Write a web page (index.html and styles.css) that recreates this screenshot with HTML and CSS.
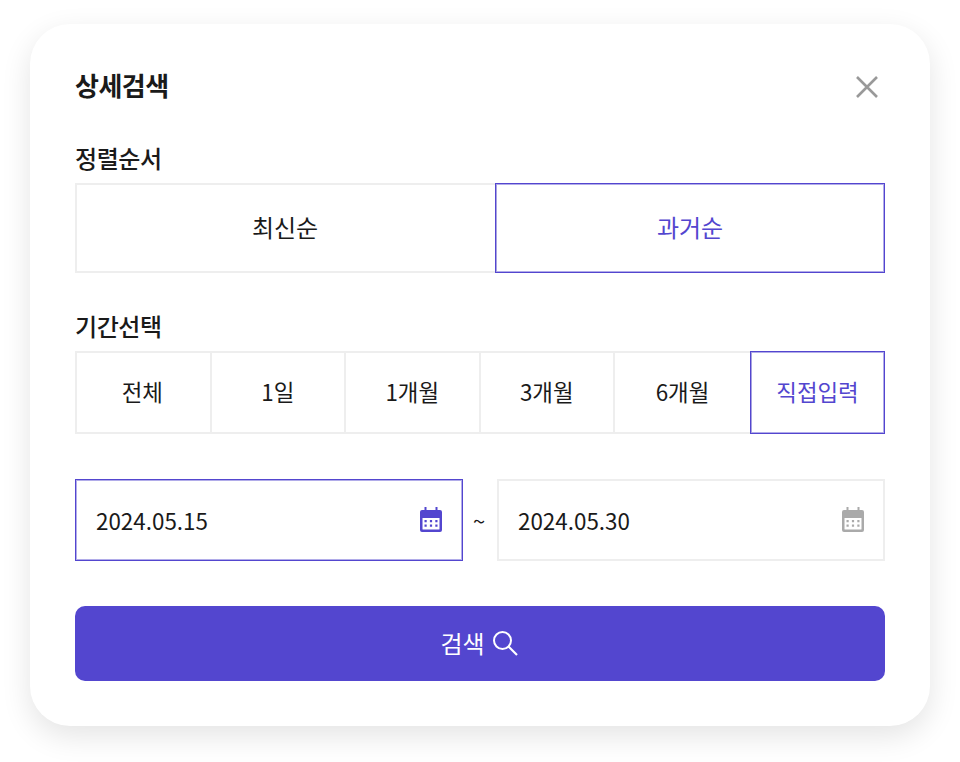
FILE: index.html
```html
<!DOCTYPE html>
<html lang="ko">

<head>
    <meta charset="UTF-8">
    <title>상세검색</title>
    <link rel="stylesheet" href="styles.css">
</head>

<body>
    <div class="modal">
        <div class="modal-head">
            <h2>상세검색</h2>
            <button class="close-btn" aria-label="닫기">
                <svg width="24" height="24" viewBox="0 0 24 24">
                    <path d="M2 2 L22 22 M22 2 L2 22" stroke="#999" stroke-width="2.6" fill="none" />
                </svg>
            </button>
        </div>

        <div class="group-label sort-label">정렬순서</div>
        <div class="tabs sort-tabs">
            <button class="tab">최신순</button>
            <button class="tab active">과거순</button>
        </div>

        <div class="group-label period-label">기간선택</div>
        <div class="tabs period-tabs">
            <button class="tab">전체</button>
            <button class="tab">1일</button>
            <button class="tab">1개월</button>
            <button class="tab">3개월</button>
            <button class="tab">6개월</button>
            <button class="tab active">직접입력</button>
        </div>

        <div class="date-row">
            <div class="date-field active">
                <span>2024.05.15</span>
                <svg class="cal" width="22" height="25" viewBox="0 0 22 25">
                    <path fill="#5346cf" fill-rule="evenodd" d="M4.500 0h2v3h9V0h2v3H20a2 2 0 0 1 2 2v18a2 2 0 0 1-2 2H2a2 2 0 0 1-2-2V5a2 2 0 0 1 2-2h2.500z M2.500 11v11a.5.5 0 0 0 .5.5h16a.5.5 0 0 0 .5-.5V11z" />
                    <path fill="#5346cf" d="M4.500 13h2.200v2.200H4.500zM9.900 13h2.200v2.200H9.900zM15.300 13h2.200v2.200h-2.200zM4.500 17.500h2.200v2.200H4.500zM9.900 17.500h2.200v2.200H9.900zM15.300 17.500h2.200v2.200h-2.200z" />
                </svg>
            </div>
            <span class="tilde">~</span>
            <div class="date-field">
                <span>2024.05.30</span>
                <svg class="cal" width="22" height="25" viewBox="0 0 22 25">
                    <path fill="#aaa" fill-rule="evenodd" d="M4.500 0h2v3h9V0h2v3H20a2 2 0 0 1 2 2v18a2 2 0 0 1-2 2H2a2 2 0 0 1-2-2V5a2 2 0 0 1 2-2h2.500z M2.500 11v11a.5.5 0 0 0 .5.5h16a.5.5 0 0 0 .5-.5V11z" />
                    <path fill="#aaa" d="M4.500 13h2.200v2.200H4.500zM9.900 13h2.200v2.200H9.900zM15.300 13h2.200v2.200h-2.200zM4.500 17.500h2.200v2.200H4.500zM9.900 17.500h2.200v2.200H9.900zM15.300 17.500h2.200v2.200h-2.200z" />
                </svg>
            </div>
        </div>

        <button class="search-btn">
            <span class="search-text">검색</span>
            <svg width="25" height="25" viewBox="-1 -1 25 25">
                <circle cx="8.500" cy="8.500" r="8.500" stroke="#fff" stroke-width="2" fill="none" />
                <path d="M14.500 14.500 L23 23" stroke="#fff" stroke-width="2.200" fill="none" />
            </svg>
        </button>
    </div>
</body>

</html>
```

FILE: styles.css
```css
* {
    box-sizing: border-box;
}

body {
    margin: 0;
    padding: 24px 30px 36px;
    background-color: #fff;
    font-family: "Noto Sans CJK KR", "Noto Sans", sans-serif;
    color: #1a1a1a;
}

.modal {
    width: 900px;
    height: 702px;
    padding: 43px 45px 45px;
    background-color: #fff;
    border-radius: 40px;
    box-shadow: 0 10px 30px rgba(0, 0, 0, 0.11);
}

button {
    font-family: inherit;
    background: none;
    border: none;
    padding: 0;
    cursor: pointer;
}

.modal-head {
    display: flex;
    justify-content: space-between;
    align-items: center;
    height: 36px;
}

.modal-head h2 {
    margin: 0;
    font-size: 26px;
    font-weight: 700;
    line-height: 36px;
    letter-spacing: -0.5px;
}

.close-btn {
    display: flex;
    margin-top: 4px;
    margin-right: 6px;
}

.group-label {
    font-size: 24px;
    font-weight: 500;
    line-height: 34px;
    letter-spacing: -0.4px;
}

.sort-label {
    margin-top: 38px;
}

.period-label {
    margin-top: 36px;
}

.tabs {
    display: flex;
}

.sort-tabs {
    margin-top: 8px;
}

.period-tabs {
    margin-top: 8px;
}

.tab {
    position: relative;
    border: 2px solid #eee;
    margin-left: -2px;
    padding-bottom: 4px;
    color: #1a1a1a;
}

.tab:first-child {
    margin-left: 0;
}

.tab.active {
    border: 1px solid #5346cf;
    box-shadow: inset 0 0 0 1px rgba(83, 70, 207, 0.45);
    color: #5346cf;
    z-index: 1;
}

.sort-tabs .tab {
    flex: 1;
    height: 90px;
    font-size: 24px;
}

.sort-tabs .tab:first-child {
    flex: 0 0 422px;
    padding-right: 2px;
}

.period-tabs .tab {
    flex: 0 0 136.5px;
    height: 83px;
    font-size: 22.4px;
}

.period-tabs .tab:first-child {
    padding-right: 2px;
}

.period-tabs .tab:nth-child(5) {
    flex: 1;
}

.period-tabs .tab.active {
    flex: 0 0 135px;
}

.date-row {
    display: flex;
    align-items: center;
    margin-top: 45px;
}

.date-field {
    flex: 1;
    height: 82px;
    display: flex;
    align-items: center;
    justify-content: space-between;
    padding: 0 19px;
    border: 2px solid #eee;
    font-size: 22.4px;
}

.date-field.active {
    border: 1px solid #5346cf;
    box-shadow: inset 0 0 0 1px rgba(83, 70, 207, 0.45);
    padding: 0 20px;
}

.cal {
    margin-bottom: 2px;
}

.tilde {
    width: 34px;
    padding-right: 2px;
    text-align: center;
    font-size: 22px;
}

.search-btn {
    display: flex;
    align-items: center;
    justify-content: center;
    gap: 8px;
    width: 100%;
    height: 75px;
    margin-top: 45px;
    padding-right: 2px;
    background-color: #5346cf;
    border-radius: 10px;
    color: #fff;
    font-size: 24px;
}

.search-text {
    margin-bottom: 2px;
}
```
